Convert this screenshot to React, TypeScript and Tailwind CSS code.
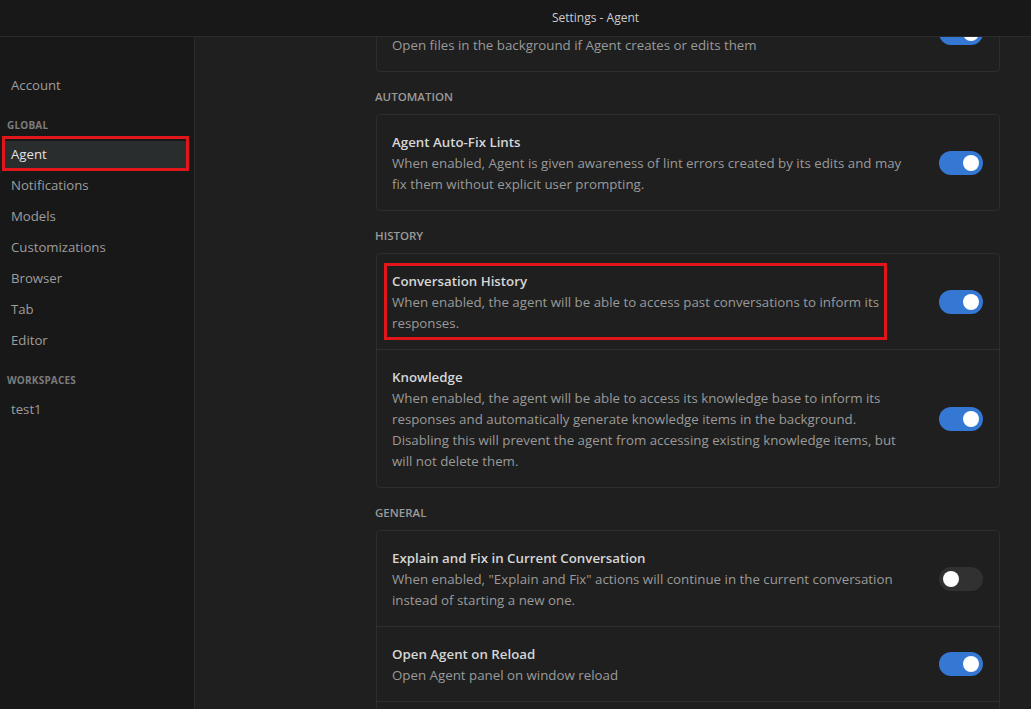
import React from "react";

function Toggle({ on }: { on: boolean }) {
  return (
    <div
      className={
        on
          ? "relative h-[24px] w-[44px] shrink-0 rounded-full bg-[#3578d4]"
          : "relative h-[24px] w-[44px] shrink-0 rounded-full bg-[#313131]"
      }
    >
      <div
        className={
          on
            ? "absolute right-[4px] top-[4px] h-[16px] w-[16px] rounded-full bg-white"
            : "absolute left-[4px] top-[4px] h-[16px] w-[16px] rounded-full bg-white"
        }
      />
    </div>
  );
}

function Row({
  title,
  lines,
  on,
  divider,
  highlight,
}: {
  title: string;
  lines: string[];
  on: boolean;
  divider?: boolean;
  highlight?: boolean;
}) {
  return (
    <div
      className={
        divider
          ? "relative flex items-center border-t border-[#2e2e2e] pl-[15px] pr-[16px] pt-[17px] pb-[15px]"
          : "relative flex items-center pl-[15px] pr-[16px] pt-[17px] pb-[15px]"
      }
    >
      <div className="flex-1 text-[13.3px] leading-[21px]">
        <div className="font-semibold text-[#d6d6d6]">{title}</div>
        {lines.map((l, i) => (
          <div key={i} className="whitespace-nowrap text-[#9a9a9a]">
            {l}
          </div>
        ))}
      </div>
      <div className="-mt-[2px]">
        <Toggle on={on} />
      </div>
      {highlight && (
        <div className="pointer-events-none absolute left-[7px] top-[9px] h-[77px] w-[503px] border-[3px] border-[#e0161b]" />
      )}
    </div>
  );
}

function Section({ label, children }: { label: string; children: React.ReactNode }) {
  return (
    <div className="pt-[17px]">
      <div className="mb-[9px] -ml-[1px] text-[11.5px] font-semibold uppercase leading-[16px] text-[#9a9a9a]">
        {label}
      </div>
      <div className="rounded-[4px] border border-[#2e2e2e]">{children}</div>
    </div>
  );
}

export default function App() {
  const navTop = ["Account"];
  const global = ["Agent", "Notifications", "Models", "Customizations", "Browser", "Tab", "Editor"];
  return (
    <div
      className="flex h-screen w-full flex-col overflow-hidden bg-[#1f1f1f]"
      style={{ fontFamily: '"Open Sans", "Noto Sans", sans-serif' }}
    >
      <div className="flex h-[37px] shrink-0 items-center justify-center border-b border-[#2b2b2b] bg-[#181818] pl-[160px] text-[12px] text-[#cccccc]">
        Settings - Agent
      </div>
      <div className="flex min-h-0 flex-1">
        <aside className="w-[195px] shrink-0 border-r border-[#2b2b2b] bg-[#181818] pt-[35px] text-[13.2px]">
          {navTop.map((n) => (
            <div key={n} className="mx-[4px] flex h-[28px] items-center px-[7px] text-[#9d9d9d]">
              {n}
            </div>
          ))}
          <div className="mt-[17px] mb-[8px] px-[7px] text-[10px] font-bold uppercase leading-[16px] tracking-[0.2px] text-[#7c7c7c]">
            Global
          </div>
          <div className="flex flex-col gap-[3px]">
            {global.map((n) => (
              <div
                key={n}
                className={
                  n === "Agent"
                    ? "relative mx-[4px] flex h-[28px] items-center bg-[#2a2d2e] px-[7px] text-[#e2e2e2]"
                    : "mx-[4px] flex h-[28px] items-center px-[7px] text-[#9d9d9d]"
                }
              >
                {n}
                {n === "Agent" && (
                  <div className="pointer-events-none absolute left-[-2px] top-[-5px] h-[35px] w-[187px] border-[3px] border-[#e0161b]" />
                )}
              </div>
            ))}
          </div>
          <div className="mt-[17px] mb-[8px] px-[7px] text-[10px] font-bold uppercase leading-[16px] tracking-[0.2px] text-[#7c7c7c]">
            Workspaces
          </div>
          <div className="mx-[4px] flex h-[28px] items-center px-[7px] text-[#9d9d9d]">test1</div>
        </aside>
        <main className="min-w-0 flex-1 overflow-hidden">
          <div className="ml-[181px] mt-[-20px] w-[624px]">
            <div className="rounded-[4px] border border-[#2e2e2e]">
              <div className="flex pl-[15px] pr-[16px] pt-[17px] pb-[15px]">
                <div className="flex-1 whitespace-nowrap text-[13.3px] leading-[21px] text-[#9a9a9a]">
                  Open files in the background if Agent creates or edits them
                </div>
                <div className="-mt-[14px] self-start">
                  <Toggle on />
                </div>
              </div>
            </div>
            <Section label="Automation">
              <Row
                title="Agent Auto-Fix Lints"
                lines={[
                  "When enabled, Agent is given awareness of lint errors created by its edits and may",
                  "fix them without explicit user prompting.",
                ]}
                on
              />
            </Section>
            <Section label="History">
              <Row
                title="Conversation History"
                lines={[
                  "When enabled, the agent will be able to access past conversations to inform its",
                  "responses.",
                ]}
                on
                highlight
              />
              <Row
                title="Knowledge"
                lines={[
                  "When enabled, the agent will be able to access its knowledge base to inform its",
                  "responses and automatically generate knowledge items in the background.",
                  "Disabling this will prevent the agent from accessing existing knowledge items, but",
                  "will not delete them.",
                ]}
                on
                divider
              />
            </Section>
            <Section label="General">
              <Row
                title="Explain and Fix in Current Conversation"
                lines={[
                  'When enabled, "Explain and Fix" actions will continue in the current conversation',
                  "instead of starting a new one.",
                ]}
                on={false}
              />
              <Row
                title="Open Agent on Reload"
                lines={["Open Agent panel on window reload"]}
                on
                divider
              />
              <div className="h-[40px] border-t border-[#2e2e2e]" />
            </Section>
          </div>
        </main>
      </div>
    </div>
  );
}
